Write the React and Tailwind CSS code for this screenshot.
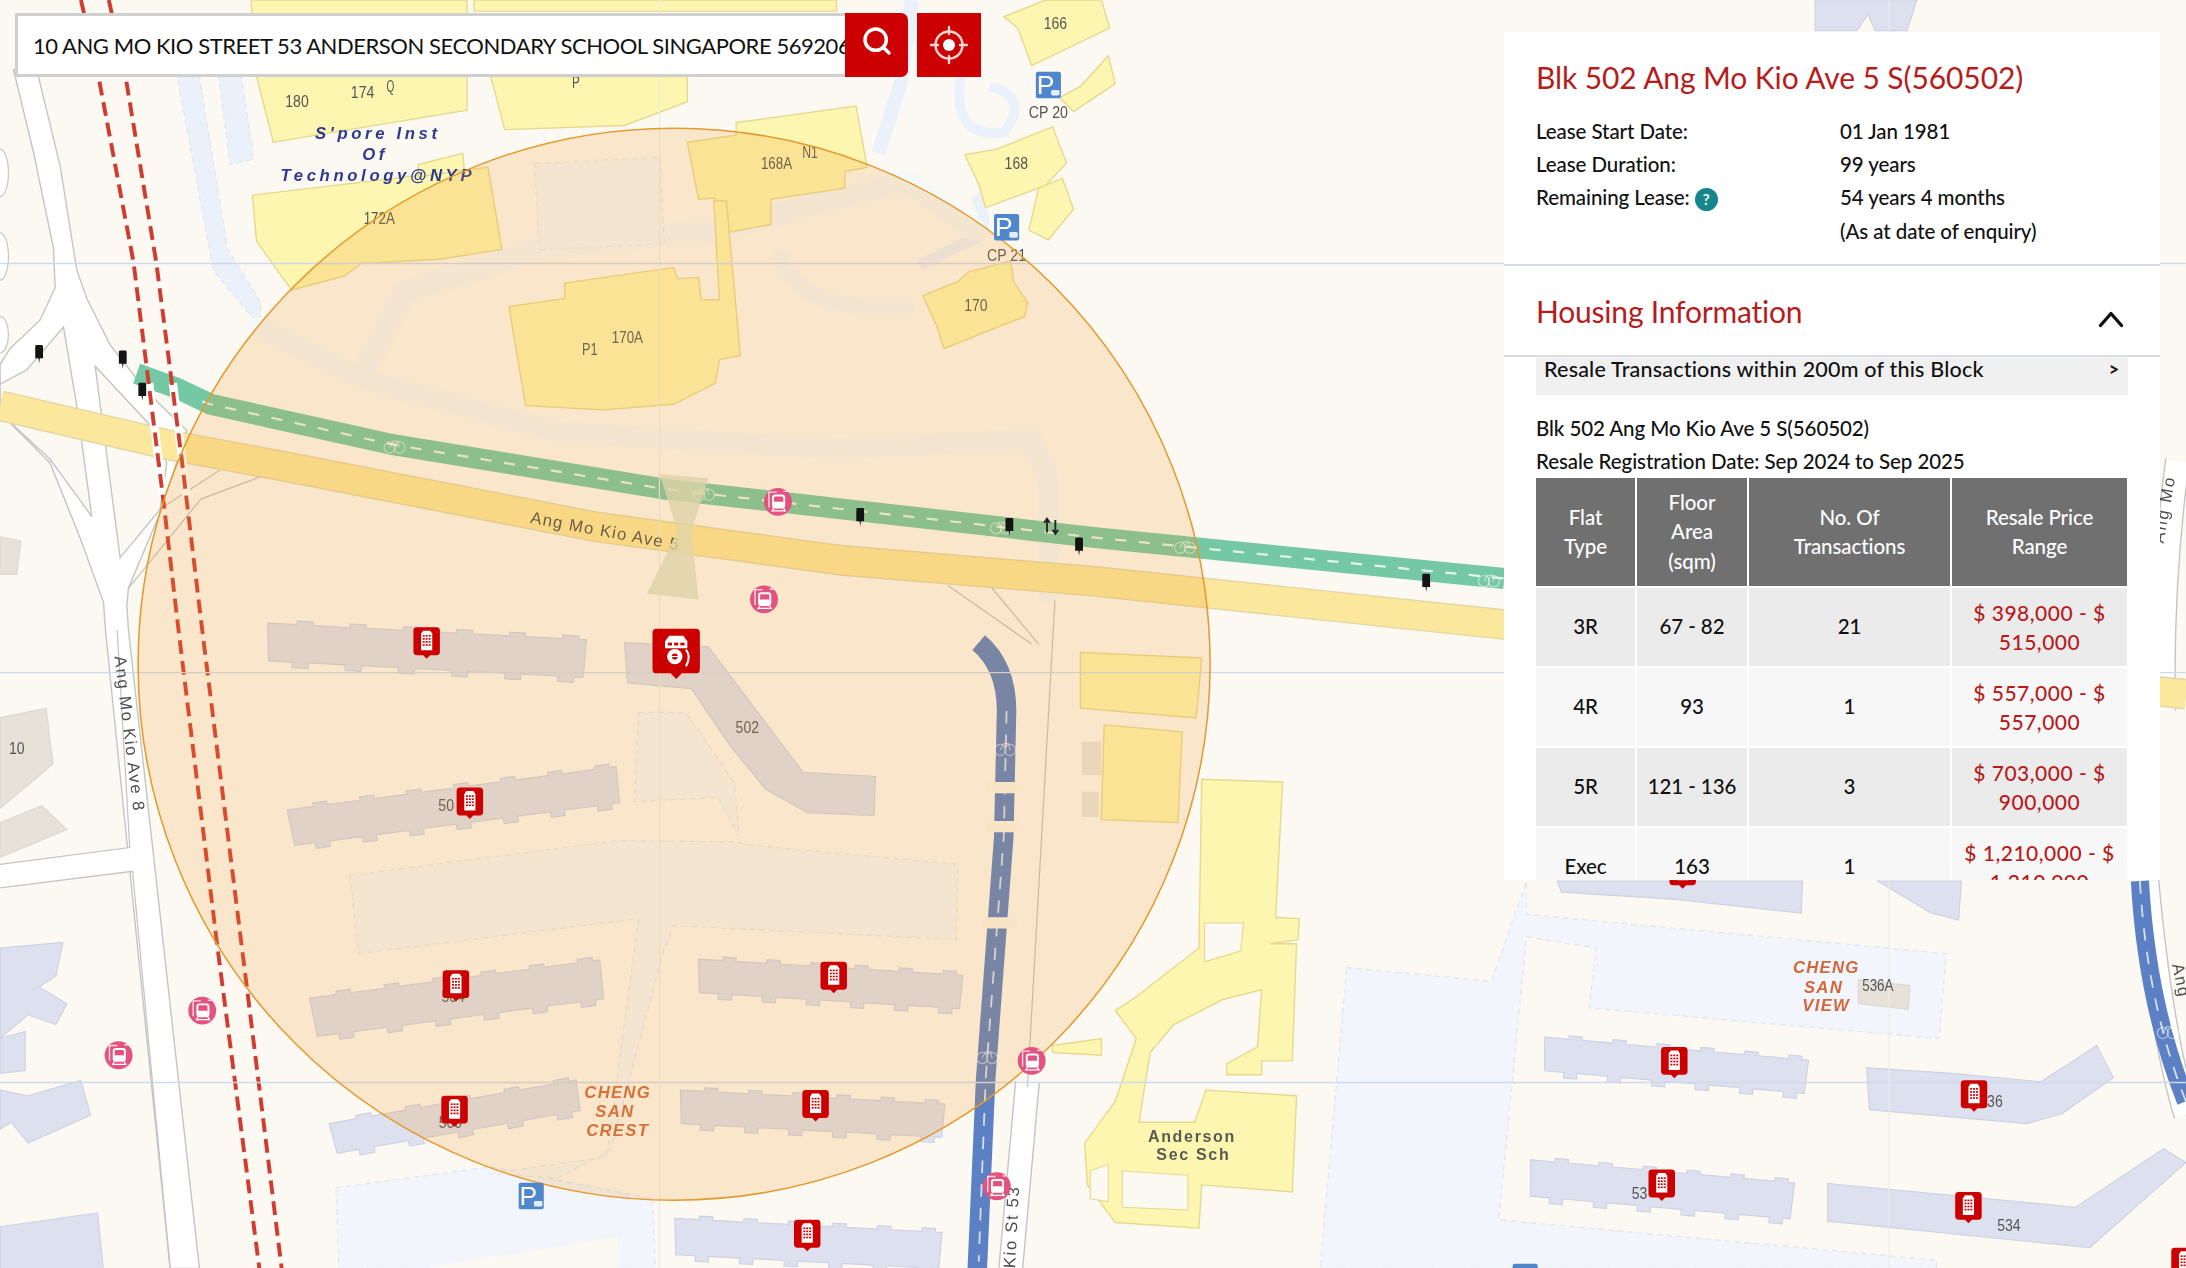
import React from "react";
import { Search } from "lucide-react";

const jag = (len, h, n) => {
  const s = len / n;
  let d = "M0 0";
  for (let i = 0; i < n; i++) {
    const x = i * s;
    d += ` L${x + s * 0.55} 0 L${x + s * 0.55} -2.5 L${x + s * 0.85} -2.5 L${x + s * 0.85} 0`;
  }
  d += ` L${len} 0 L${len - 1} ${h}`;
  for (let i = n - 1; i >= 0; i--) {
    const x = i * s;
    d += ` L${x + s * 0.8} ${h} L${x + s * 0.8} ${h + 4} L${x + s * 0.5} ${h + 4} L${x + s * 0.5} ${h}`;
  }
  d += ` L2 ${h} Z`;
  return d;
};

const blocks = [
  [192, 447, 229, 27, 3, 6],
  [206, 581, 238, 26, -7.5, 7],
  [222, 716, 210, 28, -7.5, 6],
  [501, 688, 190, 24, 3.5, 6],
  [236, 806, 180, 22, -10, 5],
  [488, 782, 190, 24, 3, 6],
  [484, 874, 192, 26, 3, 6],
  [1108, 744, 190, 24, 5, 6],
  [1098, 832, 190, 26, 5, 6],
];

const polys = {
  yellow: [
    "184,55 180,0 335,0 335,79 196,102",
    "340,0 600,0 600,8 340,8",
    "352,55 493,55 493,73 448,90 362,93",
    "181,140 350,120 360,179 315,186 259,189 247,198 209,208 184,173",
    "300,118 332,110 333,122 300,127",
    "493,102 528,97 528,88 614,76 622,120 606,123 606,135 553,143 553,161 521,167 513,142 501,143",
    "365,220 405,214 405,203 483,192 486,200 501,199 503,215 516,215 512,144 521,144 531,255 516,258 513,275 483,290 433,294 377,291",
    "662,212 687,202 695,195 725,187 727,202 737,217 735,227 677,250 672,234",
    "692,111 715,107 755,91 765,117 750,133 707,149 702,132",
    "720,12 750,0 790,0 796,20 740,47 730,20",
    "775,62 795,40 800,60 770,80 760,70",
    "745,135 762,128 770,150 752,172 738,165",
    "775,468 862,472 858,515 775,508",
    "792,520 848,525 845,590 790,588",
    "755,750 790,745 790,757 755,755",
    "862,559 920,561 915,658 932,659 931,674 911,677 930,677 927,761 905,761 905,771 880,771 880,763 902,751 905,710 877,717 842,735 825,755 817,805 857,805 865,782 930,786 927,855 862,850 860,881 800,877 780,850 778,820 800,790 815,745 800,725 815,715 860,680",
  ],
  lav: [
    "448,461 508,464 576,554 628,557 627,585 579,583 549,566 523,534 496,494 450,490",
    "1339,766 1400,770 1464,776 1504,750 1516,773 1479,799 1454,806 1341,796",
    "1311,849 1489,866 1552,824 1568,834 1499,895 1311,876",
    "1117,632 1293,632 1292,655 1200,645 1120,640",
    "1347,632 1407,632 1405,660 1385,655",
    "1302,22 1302,0 1375,0 1368,22 1345,22 1340,10 1332,22",
    "0,680 45,676 40,700 28,708 48,720 40,735 20,728 0,745",
    "0,745 18,740 18,768 0,770",
    "0,782 20,786 58,775 65,800 20,820 8,805 0,810",
    "0,880 70,870 74,910 0,910",
  ],
};

const road = (pts) => pts.map(([x, y]) => `${(x / 4.18).toFixed(1)},${(y / 3.9 + 50).toFixed(1)}`).join(" ");
const roadNet = road([
  [40, 0], [100, 230], [160, 500], [165, 610], [120, 700], [30, 780], [0, 825], [0, 960], [150, 1100], [240, 1310], [310, 1490], [316, 1568],
]) + " 122,910 143,910 " + road([
  [385, 1568], [380, 1500], [385, 1450], [480, 1240], [560, 1010], [440, 900], [330, 770], [260, 640], [230, 560], [180, 270], [110, 0],
]);
const island1 = road([[0, 880], [80, 840], [190, 720], [230, 940], [275, 1250], [150, 1090], [0, 960]]);
const island2 = road([[285, 830], [445, 990], [500, 1100], [480, 1230], [360, 1365]]);

const markers = [
  [306, 460], [337, 575], [327, 706], [598, 700], [326, 796], [585, 792], [579, 885],
  [1201, 761], [1416, 785], [1192, 849], [1412, 865], [1207, 625], [1567, 905],
];
const pinks = [[558, 360], [548, 430], [145, 725], [85, 757], [740, 761], [715, 851]];
const bollards = [[28, 254], [88, 258], [102, 281], [617, 371], [724, 378], [774, 392], [1023, 418]];
const bikes = [[283, 320], [505, 354], [718, 378], [850, 392], [1068, 416], [721, 537], [708, 758], [1555, 740]];
const parks = [[752, 61], [722, 163], [381, 858], [1094, 916]];

const labels = [
  ["166", 757, 21], ["180", 213, 77], ["174", 260, 70], ["Q", 280, 66], ["P", 413, 63],
  ["CP 20", 752, 85], ["168", 729, 121], ["168A", 557, 121], ["N1", 581, 113], ["172A", 272, 161],
  ["CP 21", 722, 187], ["170", 700, 223], ["P1", 423, 255], ["170A", 450, 246], ["502", 536, 526],
  ["50", 320, 582], ["10", 12, 541], ["534", 1441, 883], ["536A", 1347, 711], ["53", 1176, 860], ["36", 1431, 794],
  ["504", 325, 719], ["500", 323, 809],
];

function Marker({ x, y }) {
  return (
    <g transform={`translate(${x} ${y})`}>
      <path d="M-9.5 -7.5 Q-9.5 -10 -7 -10 L7 -10 Q9.5 -10 9.5 -7.5 L9.5 7.5 Q9.5 10 7 10 L2.5 10 L0 12.5 L-2.5 10 L-7 10 Q-9.5 10 -9.5 7.5 Z" fill="#cc0000" />
      <path d="M-2.5 -7.5 L2.5 -7.5 L4 -5.5 L4 6.5 L-4 6.5 L-4 -5.5 Z" fill="#fff" />
      {[-4.5, -2.3, -0.1, 2.1].map((r) => (
        <g key={r}>
          <rect x="-2.8" y={r} width="1.4" height="1.2" fill="#cc0000" />
          <rect x="-0.7" y={r} width="1.4" height="1.2" fill="#cc0000" />
          <rect x="1.4" y={r} width="1.4" height="1.2" fill="#cc0000" />
        </g>
      ))}
    </g>
  );
}

function Pink({ x, y }) {
  return (
    <g transform={`translate(${x} ${y})`}>
      <circle r="10" fill="#e4527f" />
      <path d="M-1 -7 L-6.5 -7 L-6.5 4 M4 -7.5 L7.5 -7.5" fill="none" stroke="#fbe0e8" strokeWidth="1" />
      <rect x="-3.5" y="-4.5" width="8" height="8.5" rx="1.6" fill="none" stroke="#fff" strokeWidth="1.4" />
      <rect x="-3" y="0" width="7" height="4" rx="1" fill="#fff" />
      <path d="M-3 4.5 L-4.5 7 M4 4.5 L5.5 7 M-4.5 6.5 H5.5" fill="none" stroke="#fff" strokeWidth="0.9" />
    </g>
  );
}

function Bollard({ x, y }) {
  return (
    <path transform={`translate(${x} ${y})`} d="M-2.8 -5.5 Q-2.8 -6.5 -1.8 -6.5 L1.8 -6.5 Q2.8 -6.5 2.8 -5.5 L2.8 3 L0.5 3 L0 6.5 L-0.5 3 L-2.8 3 Z" fill="#141414" />
  );
}

function Bike({ x, y }) {
  return (
    <g transform={`translate(${x} ${y})`} fill="none" stroke="#ffffff" strokeOpacity="0.5" strokeWidth="0.9">
      <circle cx="-3.5" cy="1" r="4" />
      <circle cx="3.5" cy="1" r="4" />
      <path d="M-3.5 1 L-1 -3.5 L2.5 -3.5 L3.5 1" />
    </g>
  );
}

function Park({ x, y }) {
  return (
    <g transform={`translate(${x} ${y})`}>
      <rect x="-9" y="-9.5" width="18" height="19" rx="1.5" fill="#4f86cc" />
      <text x="-2" y="6.5" textAnchor="middle" fontSize="19" fontFamily="'Liberation Sans', sans-serif" fill="#fff">P</text>
      <rect x="2" y="3.5" width="6" height="4" rx="1" fill="#fff" opacity="0.85" />
    </g>
  );
}

function MapDrawing() {
  const mono = "'Liberation Sans', sans-serif";
  const walk = "#f4f8f9";
  return (
    <svg viewBox="0 0 1568 909.6" className="absolute inset-0 h-[1268px] w-[2186px] blur-[0.5px]">
      <rect width="1568" height="910" fill="#fcf9f3" />

      {/* pale precinct areas */}
      <g fill="#f2f6fc" stroke="#e1e7ef" strokeWidth="1" strokeDasharray="4 3">
        <polygon points="966,694 1070,704 1095,632 1095,656 1396,684 1391,745 1140,723 1145,680 1095,672 1075,875 1389,904 1389,910 947,910" />
        <polygon points="241,852 352,837 468,860 470,910 243,910" />
        <polygon points="127,55 143,55 163,178 187,217 187,235 153,194" fill="#ebf1fa" />
        <polygon points="157,55 173,55 182,114 165,118" fill="#ebf1fa" />
      </g>
      <polygon points="302,910 443,887 443,910" fill="#fcf9f3" />
      <g fill="none" stroke="#ebf1fa" strokeWidth="10">
        <path d="M654 0 L646 60 L630 110" />
        <path d="M690 50 Q680 100 720 95 Q740 70 710 62" strokeWidth="7" />
        <path d="M700 140 Q715 170 690 175 L660 190" strokeWidth="8" />
      </g>

      {/* left-edge turning circles */}
      <g fill="#ffffff" stroke="#c8c8c6" strokeWidth="0.9">
        <ellipse cx="0" cy="124" rx="6" ry="17" />
        <ellipse cx="0" cy="184" rx="6" ry="17" />
        <ellipse cx="0" cy="240" rx="6" ry="13" />
      </g>

      {/* white roads */}
      <polygon points={roadNet} fill="#ffffff" stroke="#c4c4c2" strokeWidth="1" />
      <polygon points={island1} fill="#fcf9f3" stroke="#c4c4c2" strokeWidth="1" />
      <polygon points={island2} fill="#fcf9f3" stroke="#c4c4c2" strokeWidth="1" />
      <g fill="none" strokeLinecap="butt">
        <g stroke="#c4c4c2" strokeWidth="18">
          <path d="M737 776 L725 910" />
          <path d="M1540 632 Q1550 740 1568 800" />
          <path d="M1562 330 Q1550 420 1552 510" />
        </g>
        <g stroke="#ffffff" strokeWidth="16">
          <path d="M737 776 L725 910" />
          <path d="M1540 632 Q1550 740 1568 800" />
          <path d="M1562 330 Q1550 420 1552 510" />
        </g>
        <polygon points="0,620 93,608 95,625 0,637" fill="#ffffff" stroke="none" />
      </g>

      {/* plot outlines */}
      <g fill="none" stroke="#c4c4c2" strokeWidth="0.9">
        <path d="M0 620 L93 608 L84 452" />
        <path d="M0 637 L95 625 L122 910" />
        <path d="M115 365 L158 337" />
        <path d="M92 422 L144 358 L187 342" />
        <path d="M757 425 L737 780" />
        <path d="M680 420 L740 462" />
        <path d="M710 420 L745 462" />
      </g>

      {/* walkways */}
      <g fill="none" stroke={walk} strokeLinecap="round" strokeLinejoin="round">
        <path d="M262 265 L290 210 L390 178 L513 165 L650 130 L700 165" strokeWidth="16" />
        <path d="M185 235 L260 272 L400 310 L600 322 L740 315 L752 345 L752 425" strokeWidth="15" />
        <path d="M560 185 Q575 225 650 220" strokeWidth="12" />
      </g>
      <rect x="385" y="115" width="90" height="62" transform="rotate(-3 430 146)" fill={walk} stroke="#e8ebec" strokeDasharray="4 3" />
      <g fill={walk} stroke="#e4e6e6" strokeWidth="0.8" strokeDasharray="4 3">
        <polygon points="251,628 443,603 528,604 536,606 687,620 686,674 483,664 475,685 438,825 400,845 350,842 435,830 458,659 257,684" />
        <polygon points="458,511 492,511 527,562 530,600 515,572 455,575" />
      </g>

      {/* buildings */}
      <g fill="#fdf6b0" stroke="#e6d98e" strokeWidth="1">
        {polys.yellow.map((p) => <polygon key={p} points={p} />)}
      </g>
      <g fill="#fcf9f3" stroke="#e6d98e" strokeWidth="0.8">
        <polygon points="864,662 892,662 890,682 864,690" />
        <polygon points="805,840 852,843 852,868 805,866" />
        <polygon points="782,840 795,835 795,862 782,860" />
      </g>
      <rect x="776" y="532" width="14" height="24" fill="#e9e5dc" />
      <rect x="776" y="568" width="12" height="18" fill="#e9e5dc" />

      {/* residential blocks */}
      <g fill="#dde0ee" stroke="#cdd1e2" strokeWidth="0.8">
        {polys.lav.map((p) => <polygon key={p} points={p} />)}
        {blocks.map(([x, y, l, h, r, n]) => (
          <path key={`${x}-${y}`} transform={`translate(${x} ${y}) rotate(${r})`} d={jag(l, h, n)} />
        ))}
      </g>
      <g fill="#e6e2da" stroke="#dcd8cf" strokeWidth="0.8">
        <polygon points="0,515 33,508 38,548 0,580" />
        <polygon points="0,590 30,578 48,595 0,615" />
        <polygon points="0,385 15,388 12,412 0,412" />
        <polygon points="1333,703 1370,707 1369,724 1333,720" />
      </g>

      {/* Ang Mo Kio Ave 5 */}
      <path d="M0 291 L120 319 L201 334 L428 378 L604 402 L785 417 L1079 448 L1568 498" fill="none" stroke="#e2d7a4" strokeWidth="22" />
      <path d="M0 291 L120 319 L201 334 L428 378 L604 402 L785 417 L1079 448 L1568 498" fill="none" stroke="#fce89c" strokeWidth="20" />

      {/* cycling path */}
      <path d="M98 268 L126 278 L151 290 L282 319 L478 351 L789 386 L1079 415" fill="none" stroke="#74c8a4" strokeWidth="15" />
      <path d="M145 288 L151 290 L282 319 L478 351 L789 386 L1079 415" fill="none" stroke="#ffffff" strokeOpacity="0.8" strokeWidth="1.6" strokeDasharray="8 9" />
      {/* blue path */}
      <path d="M702 461 Q722 478 722 510 L720 600 L707 774 L701 910" fill="none" stroke="#5c80c4" strokeWidth="14" />
      <path d="M722 510 L720 600 L707 774 L702 905" fill="none" stroke="#ffffff" strokeOpacity="0.75" strokeWidth="1.3" strokeDasharray="9 8" />
      <path d="M708 565 L732 565 M707 593 L731 593 M704 662 L730 662" stroke="#fcf7ec" strokeWidth="8" />
      <path d="M1535 632 Q1540 720 1568 790" fill="none" stroke="#5c80c4" strokeWidth="13" />
      <path d="M1535 632 Q1540 720 1568 790" fill="none" stroke="#fff" strokeOpacity="0.75" strokeWidth="1.3" strokeDasharray="9 8" />

      {/* MRT line */}
      <g fill="none" stroke="#ffffff" strokeWidth="6">
        <path d="M107 275 L117 358" />
        <path d="M124 275 L134 358" />
      </g>
      <g fill="none" stroke="#d13b30" strokeWidth="2.8" strokeDasharray="10 5">
        <path d="M58 0 L70.6 55 L95.7 188 L117 358 L128 452 L156 680 L186 910" />
        <path d="M78 0 L90 55 L112 188 L130 327 L145 452 L176 700 L202 910" />
      </g>

      {bikes.map(([x, y]) => <Bike key={`${x}-${y}`} x={x} y={y} />)}

      {/* tile seams */}
      <g stroke="#cdd9ec" strokeWidth="1">
        <path d="M0 189 H1568 M0 482.5 H1568 M0 776.5 H1568" />
      </g>
      <path d="M473 0 V910 M1355 0 V910" stroke="#ecebe6" strokeWidth="0.8" />

      {/* labels under overlay */}
      <g fontFamily={mono} fontSize="11.5" fill="#555" textAnchor="middle">
        {labels.map(([t, x, y]) => (
          <text key={t + x} x={x} y={y} textLength={t.length * 5.6} lengthAdjust="spacingAndGlyphs">{t}</text>
        ))}
      </g>
      <g fontFamily={mono} fontSize="12" fontWeight="700" fontStyle="italic" fill="#2e3a8f" textAnchor="middle" letterSpacing="2.6">
        <text x="271" y="100">S'pore Inst</text>
        <text x="269" y="115">Of</text>
        <text x="271" y="130">Technology@NYP</text>
      </g>
      <text x="380" y="375" transform="rotate(10.5 380 375)" fontFamily={mono} fontSize="12" fill="#4d4d4d" letterSpacing="0.85">Ang Mo Kio Ave 5</text>
      <text x="82" y="471" transform="rotate(83 82 471)" fontFamily={mono} fontSize="12" fill="#4d4d4d" letterSpacing="1.1">Ang Mo Kio Ave 8</text>
      <text x="728" y="910" transform="rotate(-87 728 910)" fontFamily={mono} fontSize="12" fill="#4d4d4d" letterSpacing="1.2">Kio St 53</text>
      <text x="1552" y="390" transform="rotate(-80 1552 390)" fontFamily={mono} fontSize="12" fill="#4d4d4d" letterSpacing="1.2">Ang Mo</text>
      <text x="1558" y="692" transform="rotate(78 1558 692)" fontFamily={mono} fontSize="12" fill="#4d4d4d" letterSpacing="1.2">Ang</text>
      <g fontFamily={mono} fontSize="12" fontStyle="italic" fontWeight="700" fill="#d2673a" textAnchor="middle" letterSpacing="0.9">
        <text x="443" y="788">CHENG</text>
        <text x="441" y="801">SAN</text>
        <text x="443" y="815">CREST</text>
        <text x="1310" y="698">CHENG</text>
        <text x="1308" y="712">SAN</text>
        <text x="1310" y="725">VIEW</text>
      </g>
      <g fontFamily={mono} fontSize="11.5" fontWeight="700" fill="#5a5a52" textAnchor="middle" letterSpacing="1.2">
        <text x="855" y="819">Anderson</text>
        <text x="856" y="832">Sec Sch</text>
      </g>

      {/* overhead bridge */}
      <polygon points="473,340 508,343 496,381 501,430 464,426 486,381" fill="#d9e2c8" fillOpacity="0.8" />

      {/* catchment circle */}
      <circle cx="483.5" cy="476.5" r="384.5" fill="#f0992f" fillOpacity="0.2" stroke="#e39a2e" strokeWidth="1.1" />

      {/* symbols */}
      {pinks.map(([x, y]) => <Pink key={`${x}-${y}`} x={x} y={y} />)}
      {bollards.map(([x, y]) => <Bollard key={`${x}-${y}`} x={x} y={y} />)}
      {parks.map(([x, y]) => <Park key={`${x}-${y}`} x={x} y={y} />)}
      {markers.map(([x, y]) => <Marker key={`${x}-${y}`} x={x} y={y} />)}
      <path d="M751 382 V373 M749 375 L751 372 L753 375 M757 373 V382 M755 380 L757 383 L759 380" fill="none" stroke="#222" strokeWidth="1.3" />

      {/* selected block marker */}
      <g transform="translate(485 468)">
        <path d="M-17 -14 Q-17 -17 -14 -17 L14 -17 Q17 -17 17 -14 L17 12 Q17 15 14 15 L4 15 L0 19 L-4 15 L-14 15 Q-17 15 -17 12 Z" fill="#cc0000" />
        <path d="M-5 -12 L5 -12 L8 -8 L8 -3 L-8 -3 L-8 -8 Z" fill="#fff" />
        <rect x="-6" y="-7" width="3" height="2" fill="#cc0000" />
        <rect x="-1.5" y="-7" width="3" height="2" fill="#cc0000" />
        <rect x="3" y="-7" width="3" height="2" fill="#cc0000" />
        <path d="M7 -2 Q11 3 7 10" fill="none" stroke="#fff" strokeWidth="1.5" />
        <circle cx="-1" cy="3" r="5.5" fill="#fff" />
        <circle cx="-1" cy="3" r="2.2" fill="#cc0000" />
        <path d="M-6 3 H4" stroke="#fff" strokeWidth="0.8" />
      </g>
    </svg>
  );
}

const rows = [
  ["3R", "67 - 82", "21", "$ 398,000 - $ 515,000", "bg-[#ebebeb]"],
  ["4R", "93", "1", "$ 557,000 - $ 557,000", "bg-[#f7f7f7]"],
  ["5R", "121 - 136", "3", "$ 703,000 - $ 900,000", "bg-[#ebebeb]"],
  ["Exec", "163", "1", "$ 1,210,000 - $ 1,210,000", "bg-[#f7f7f7]"],
];

function Panel() {
  return (
    <aside className="absolute left-[1504px] top-[32px] h-[848px] w-[656px] overflow-hidden bg-white font-['Lato',sans-serif] text-[20.5px] font-medium leading-[33px] tracking-[-0.08px] text-[#111]">
      <div className="border-b-2 border-[#d9dde3] px-8 pb-[16px] pt-[27px]">
        <h2 className="text-[30px] font-normal leading-[36px] tracking-[-0.1px] text-[#b71c1c]">Blk 502 Ang Mo Kio Ave 5 S(560502)</h2>
        <dl className="mt-[20px] grid grid-cols-[304px_1fr]">
          <dt>Lease Start Date:</dt>
          <dd>01 Jan 1981</dd>
          <dt>Lease Duration:</dt>
          <dd>99 years</dd>
          <dt className="flex items-center gap-[5px]">
            Remaining Lease:
            <span className="mt-[3px] flex h-[23px] w-[23px] items-center justify-center rounded-full bg-[#17868c] text-[16px] font-bold leading-none text-[#e4f3f3]">?</span>
          </dt>
          <dd>54 years 4 months</dd>
          <dt />
          <dd className="pt-[1px]">(As at date of enquiry)</dd>
        </dl>
      </div>
      <div className="flex h-[91px] items-center justify-between border-b-2 border-[#d9dde3] px-8">
        <h2 className="text-[30px] font-normal leading-[36px] tracking-[-0.2px] text-[#b71c1c]">Housing Information</h2>
        <svg viewBox="0 0 26 18" className="mr-[4px] mt-[17px] h-[18px] w-[26px]" fill="none" stroke="#111" strokeWidth="3.4" strokeLinecap="round" strokeLinejoin="round">
          <path d="M2.5 15.5 L13 3.5 L23.5 15.5" />
        </svg>
      </div>
      <div className="px-8">
        <div className="flex h-[38px] items-start justify-between bg-[#f0f0f0] pl-2 pr-[9px]">
          <span className="text-[21.5px] leading-[25px] tracking-[0.2px]">Resale Transactions within 200m of this Block</span>
          <span className="text-[18px] font-bold leading-[25px]">&gt;</span>
        </div>
        <p className="mt-[17px]">Blk 502 Ang Mo Kio Ave 5 S(560502)</p>
        <p>Resale Registration Date: Sep 2024 to Sep 2025</p>
        <table className="w-[591px] table-fixed border-collapse text-center leading-[29.5px]">
          <colgroup>
            <col className="w-[100px]" />
            <col className="w-[112px]" />
            <col className="w-[203px]" />
            <col className="w-[176px]" />
          </colgroup>
          <thead>
            <tr className="h-[109px] bg-[#707070] text-white">
              <th className="border-r-2 border-white font-medium">Flat<br />Type</th>
              <th className="border-r-2 border-white font-medium">Floor<br />Area<br />(sqm)</th>
              <th className="border-r-2 border-white font-medium">No. Of<br />Transactions</th>
              <th className="font-medium">Resale Price<br />Range</th>
            </tr>
          </thead>
          <tbody>
            {rows.map(([a, b, c, d, bg]) => (
              <tr key={a} className={`h-[80px] border-y-2 border-white ${bg}`}>
                <td className="border-r-2 border-white">{a}</td>
                <td className="border-r-2 border-white">{b}</td>
                <td className="border-r-2 border-white">{c}</td>
                <td className="px-1 text-[21px] tracking-[0.5px] text-[#b71c1c]">{d}</td>
              </tr>
            ))}
          </tbody>
        </table>
      </div>
    </aside>
  );
}

function SearchBar() {
  return (
    <div className="absolute left-[15px] top-[13px] flex h-[64px] font-['Lato',sans-serif]">
      <div className="flex h-full w-[830px] items-center overflow-hidden whitespace-nowrap border-y-[3px] border-l-[3px] border-[#cfcfcf] bg-white pl-[15px] text-[22px] tracking-[-0.45px] text-[#111]">
        10 ANG MO KIO STREET 53 ANDERSON SECONDARY SCHOOL SINGAPORE 569206
      </div>
      <button className="flex h-full w-[63px] items-center justify-center rounded-r-[7px] bg-[#cc0000] pb-[8px]">
        <Search size={32} color="#fff" strokeWidth={2.6} />
      </button>
      <button className="ml-[9px] flex h-full w-[64px] items-center justify-center bg-[#cc0000]">
        <svg viewBox="0 0 40 40" className="h-[40px] w-[40px]" fill="none">
          <circle cx="20" cy="20" r="13.5" stroke="#ffd5d5" strokeWidth="2.4" />
          <path d="M20 2 V9 M20 31 V38 M2 20 H9 M31 20 H38" stroke="#ffd5d5" strokeWidth="2.4" strokeLinecap="round" />
          <circle cx="20" cy="20" r="6" fill="#fff" />
        </svg>
      </button>
    </div>
  );
}

export default function App() {
  return (
    <div className="relative h-[1268px] w-[2186px] overflow-hidden bg-[#fcf9f3]">
      <MapDrawing />
      <SearchBar />
      <Panel />
    </div>
  );
}
